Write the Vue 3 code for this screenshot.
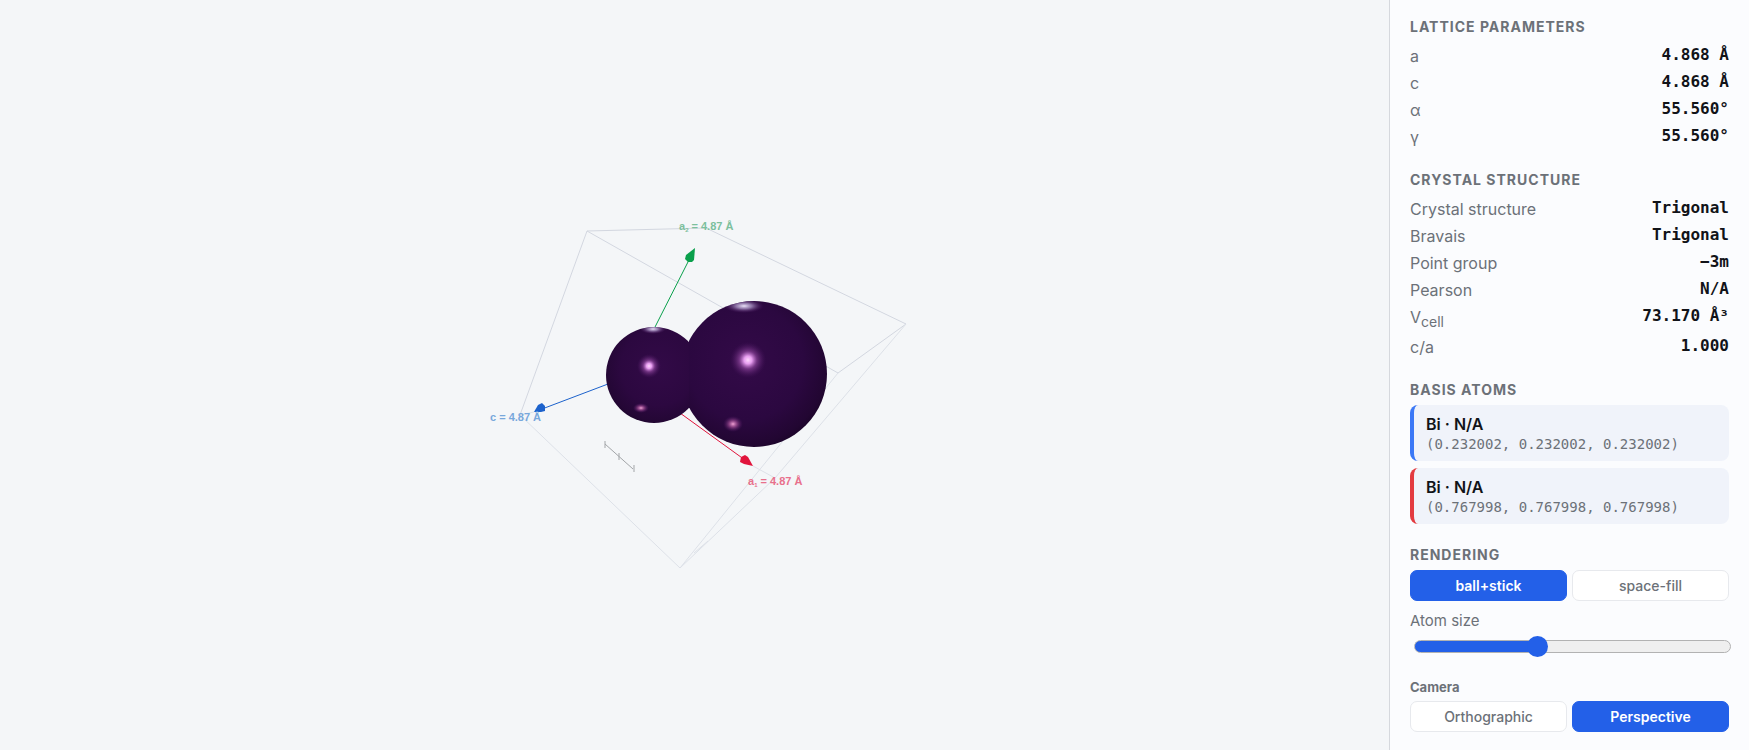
<script setup>
import { ref, computed } from "vue"

const lattice = [
  { label: "a", value: "4.868 Å" },
  { label: "c", value: "4.868 Å" },
  { label: "α", value: "55.560°" },
  { label: "γ", value: "55.560°" }
]

const crystal = [
  { label: "Crystal structure", value: "Trigonal" },
  { label: "Bravais", value: "Trigonal" },
  { label: "Point group", value: "−3m" },
  { label: "Pearson", value: "N/A" },
  { label: "V", sub: "cell", value: "73.170 Å³" },
  { label: "c/a", value: "1.000" }
]

const atoms = [
  { name: "Bi · N/A", coords: "(0.232002, 0.232002, 0.232002)", tone: "blue" },
  { name: "Bi · N/A", coords: "(0.767998, 0.767998, 0.767998)", tone: "red" }
]

const renderModes = ["ball+stick", "space-fill"]
const cameraModes = ["Orthographic", "Perspective"]

const renderMode = ref("ball+stick")
const cameraMode = ref("Perspective")
const atomSize = ref(38)

const fill = computed(() => `${atomSize.value}%`)
</script>

<template>
  <div class="viewer">

    <main class="stage">
      <svg
        class="scene"
        viewBox="0 0 1389 750"
        role="img"
        aria-label="Unit cell"
      >
        <defs>
          <radialGradient id="ball-small" cx="0.55" cy="0.42" r="0.66">
            <stop offset="0" stop-color="#320a47" />
            <stop offset="0.6" stop-color="#2c0840" />
            <stop offset="0.85" stop-color="#240735" />
            <stop offset="1" stop-color="#180424" />
          </radialGradient>
          <radialGradient id="ball-large" cx="0.44" cy="0.42" r="0.66">
            <stop offset="0" stop-color="#330a48" />
            <stop offset="0.6" stop-color="#2b0840" />
            <stop offset="0.85" stop-color="#220632" />
            <stop offset="1" stop-color="#150320" />
          </radialGradient>
          <radialGradient id="glow">
            <stop offset="0" stop-color="#ffd8ff" />
            <stop offset="0.22" stop-color="#e79df0" />
            <stop offset="0.5" stop-color="#8b4399" stop-opacity="0.7" />
            <stop offset="1" stop-color="#4a1460" stop-opacity="0" />
          </radialGradient>
          <radialGradient id="spot">
            <stop offset="0" stop-color="#f0a0d4" />
            <stop offset="0.4" stop-color="#9c4a90" stop-opacity="0.8" />
            <stop offset="1" stop-color="#4a1460" stop-opacity="0" />
          </radialGradient>
          <radialGradient id="rim">
            <stop offset="0" stop-color="#ece4fa" />
            <stop offset="0.4" stop-color="#a68fc0" stop-opacity="0.8" />
            <stop offset="1" stop-color="#4a1460" stop-opacity="0" />
          </radialGradient>
          <clipPath id="small-clip">
            <circle cx="654" cy="375" r="48" />
          </clipPath>
          <clipPath id="large-clip">
            <circle cx="754" cy="374" r="73" />
          </clipPath>
          <clipPath id="seam-clip">
            <rect x="689" y="290" width="150" height="170" />
          </clipPath>
        </defs>

        <g class="cell">
          <path d="M587 231L706 228L906 324L838 373Z" />
          <path d="M587 231L520 415" />
          <path class="faint" d="M520 415L680 568" />
          <path class="faint" d="M680 568L838 373" />
          <path class="faint" d="M906 324L775 478L680 568" />
          <path class="faint" d="M753 466L775 478M534 412L520 415M694 553L708 541" />
        </g>

        <g class="ruler">
          <path d="M605 444L633 469M605 441V448M619 453V460M634 465V472" />
        </g>

        <g class="axis green">
          <path d="M654 329L690 258" />
          <polygon points="695,248 686,255 685,259 688,262 692,262 694,260" />
        </g>
        <g class="axis blue">
          <path d="M608 384L542 409" />
          <polygon points="534,412 538,405 542,403 545,406 545,411 541,412" />
        </g>
        <g class="axis red">
          <path d="M680 413L745 460" />
          <polygon points="753,466 748,457 745,455 741,457 740,462 744,464" />
        </g>

        <circle cx="654" cy="375" r="48" fill="url(#ball-small)" />
        <g clip-path="url(#small-clip)">
          <circle cx="649" cy="366" r="12" fill="url(#glow)" />
          <ellipse cx="641" cy="408" rx="8" ry="5" fill="url(#spot)" />
          <ellipse cx="653" cy="329" rx="13" ry="5" fill="url(#rim)" />
        </g>

        <g clip-path="url(#seam-clip)">
          <circle cx="754" cy="374" r="73" fill="url(#ball-large)" />
        </g>
        <g clip-path="url(#large-clip)">
          <circle cx="748" cy="360" r="18" fill="url(#glow)" />
          <ellipse cx="733" cy="424" rx="10" ry="8" fill="url(#spot)" />
          <ellipse cx="744" cy="306" rx="20" ry="7" fill="url(#rim)" />
        </g>

        <g class="tags">
          <text class="green" x="679" y="230">a<tspan class="index" dy="2">2</tspan><tspan dy="-2"> = 4.87 Å</tspan></text>
          <text class="blue" x="490" y="421">c = 4.87 Å</text>
          <text class="red" x="748" y="485">a<tspan class="index" dy="2">1</tspan><tspan dy="-2"> = 4.87 Å</tspan></text>
        </g>
      </svg>
    </main>

    <aside class="panel">

      <section>
        <h2>Lattice parameters</h2>
        <dl>
          <div v-for="row in lattice" :key="row.label" class="row">
            <dt>{{ row.label }}</dt>
            <dd>{{ row.value }}</dd>
          </div>
        </dl>
      </section>

      <section>
        <h2>Crystal structure</h2>
        <dl>
          <div v-for="row in crystal" :key="row.label" class="row">
            <dt>{{ row.label }}<sub v-if="row.sub">{{ row.sub }}</sub></dt>
            <dd>{{ row.value }}</dd>
          </div>
        </dl>
      </section>

      <section>
        <h2>Basis atoms</h2>
        <ul class="atoms">
          <li
            v-for="atom in atoms"
            :key="atom.coords"
            class="atom"
            :class="atom.tone"
          >
            <strong>{{ atom.name }}</strong>
            <span>{{ atom.coords }}</span>
          </li>
        </ul>
      </section>

      <section>
        <h2>Rendering</h2>
        <div class="toggle">
          <button
            v-for="mode in renderModes"
            :key="mode"
            type="button"
            :class="{ active: renderMode === mode }"
            @click="renderMode = mode"
          >
            {{ mode }}
          </button>
        </div>

        <label class="size-label" for="atom-size">Atom size</label>
        <input
          id="atom-size"
          v-model.number="atomSize"
          class="slider"
          type="range"
          min="0"
          max="100"
          :style="{ '--fill': fill }"
        >
      </section>

      <section>
        <h3>Camera</h3>
        <div class="toggle">
          <button
            v-for="mode in cameraModes"
            :key="mode"
            type="button"
            :class="{ active: cameraMode === mode }"
            @click="cameraMode = mode"
          >
            {{ mode }}
          </button>
        </div>
      </section>

    </aside>

  </div>
</template>

<style>
body {
  margin: 0;

  background: #f4f6f8;
}
</style>

<style scoped>
.viewer {
  display: flex;
  min-height: 100vh;

  background: #f4f6f8;

  font-family: Inter, "Liberation Sans", sans-serif;
  color: #111318;
}

.stage {
  flex: 1;
  min-width: 0;

  display: flex;
  align-items: center;
}

.scene {
  display: block;
  width: 100%;
}

.cell path {
  fill: none;
  stroke: #d3d7e0;
  stroke-width: 1;
}

.cell .faint {
  stroke: #dde1e8;
}

.ruler path {
  fill: none;
  stroke: #a2a5a8;
  stroke-width: 1;
}

.axis path {
  fill: none;
  stroke: currentColor;
  stroke-width: 1;
}

.axis polygon {
  fill: currentColor;
}

.axis.green {
  color: #0aa04c;
}

.axis.blue {
  color: #1c62cc;
}

.axis.red {
  color: #e1143c;
}

.tags {
  font-family: "Liberation Sans", Arial, sans-serif;
  font-size: 11px;
  font-weight: 700;
}

.tags .index {
  font-size: 6px;
}

.tags .green {
  fill: #7cc09d;
}

.tags .blue {
  fill: #78a8dc;
}

.tags .red {
  fill: #e8708c;
}

.panel {
  box-sizing: border-box;
  flex: 0 0 360px;

  display: flex;
  flex-direction: column;
  gap: 22px;

  padding: 18px 20px 16px;

  background: #fbfcfe;

  border-left: 1px solid #d5d8dd;
}

h2 {
  margin: 0 0 7px;

  color: #6c7178;

  font-size: 14px;
  font-weight: 700;
  line-height: 17px;
  letter-spacing: 1px;
  text-transform: uppercase;
}

h3 {
  margin: 0 0 5px;

  color: #6c7178;

  font-size: 13px;
  font-weight: 700;
  line-height: 17px;
}

dl {
  display: flex;
  flex-direction: column;
  gap: 3px;

  margin: 0;
  padding-top: 2px;
}

.row {
  display: flex;
  justify-content: space-between;
  align-items: flex-start;
}

dt {
  color: #6c7178;

  font-size: 16px;
  line-height: 24px;
}

dt sub {
  font-size: 14px;
  line-height: 20px;
}

dd {
  margin: 0;

  font-family: "DejaVu Sans Mono", monospace;
  font-size: 16px;
  font-weight: 700;
  line-height: 21px;
}

.atoms {
  display: flex;
  flex-direction: column;
  gap: 7px;

  margin: 0;
  padding: 0;

  list-style: none;
}

.atom {
  display: flex;
  flex-direction: column;

  padding: 8px 12px;

  background: #f0f3fa;

  border-left: 4px solid;
  border-radius: 8px;
}

.atom.blue {
  border-left-color: #3b78f6;
}

.atom.red {
  border-left-color: #e33b40;
}

.atom strong {
  color: #111318;

  font-size: 16px;
  font-weight: 600;
  line-height: 22px;
}

.atom span {
  color: #6c7178;

  font-family: "DejaVu Sans Mono", monospace;
  font-size: 14px;
  line-height: 18px;
}

.toggle {
  display: flex;
  gap: 5px;
}

.toggle button {
  flex: 1;

  padding: 6px;

  background: #ffffff;

  border: 1px solid #e7e9ed;
  border-radius: 7px;

  color: #6c7178;

  font-family: inherit;
  font-size: 14px;
  font-weight: 500;
  line-height: 17px;

  cursor: pointer;
}

.toggle button.active {
  background: #2360e8;
  border-color: #2360e8;

  color: #ffffff;

  font-weight: 600;
}

.size-label {
  display: block;
  margin-top: 11px;

  color: #6c7178;

  font-size: 15px;
  line-height: 18px;
}

.slider {
  --thumb: 21px;

  appearance: none;
  display: block;
  box-sizing: border-box;
  width: calc(100% - 2px);
  height: 21px;
  margin: 6px 0 0 4px;

  background: none;

  cursor: pointer;
}

.slider::-webkit-slider-runnable-track {
  box-sizing: border-box;
  height: 13px;

  background: linear-gradient(
    90deg,
    #2360e8 var(--fill),
    #efefef var(--fill)
  );

  border: 1px solid #b2b2b2;
  border-radius: 7px;
}

.slider::-webkit-slider-thumb {
  appearance: none;
  width: var(--thumb);
  height: var(--thumb);
  margin-top: -5px;

  background: #2360e8;

  border-radius: 50%;
}
</style>
